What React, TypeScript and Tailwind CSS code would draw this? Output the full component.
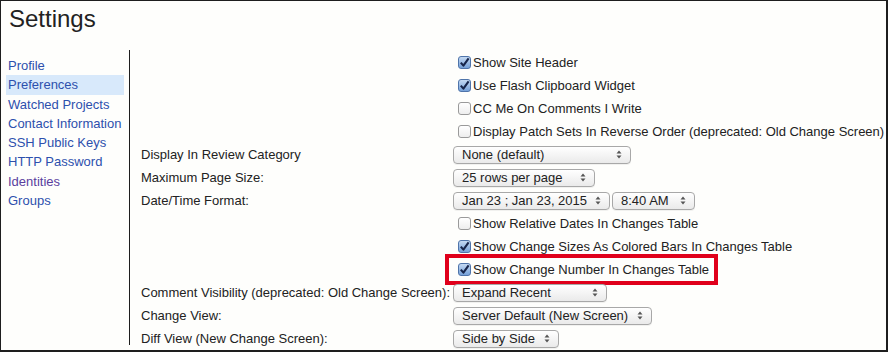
import React from 'react';

type Row = {
    label?: string;
    kind: 'check' | 'select' | 'pair';
    text?: string;
    checked?: boolean;
    width?: string;
    boxed?: boolean;
};

const rows: Row[] = [
    { kind: 'check', text: 'Show Site Header', checked: true },
    { kind: 'check', text: 'Use Flash Clipboard Widget', checked: true },
    { kind: 'check', text: 'CC Me On Comments I Write' },
    { kind: 'check', text: 'Display Patch Sets In Reverse Order (deprecated: Old Change Screen)' },
    { label: 'Display In Review Category', kind: 'select', text: 'None (default)', width: 'w-[178px]' },
    { label: 'Maximum Page Size:', kind: 'select', text: '25 rows per page', width: 'w-[142px]' },
    { label: 'Date/Time Format:', kind: 'pair' },
    { kind: 'check', text: 'Show Relative Dates In Changes Table' },
    { kind: 'check', text: 'Show Change Sizes As Colored Bars In Changes Table', checked: true },
    { kind: 'check', text: 'Show Change Number In Changes Table', checked: true, boxed: true },
    { label: 'Comment Visibility (deprecated: Old Change Screen):', kind: 'select', text: 'Expand Recent', width: 'w-[154px]' },
    { label: 'Change View:', kind: 'select', text: 'Server Default (New Screen)', width: 'w-[199px]' },
    { label: 'Diff View (New Change Screen):', kind: 'select', text: 'Side by Side', width: 'w-[106px]' },
];

const links = ['Profile', 'Preferences', 'Watched Projects', 'Contact Information', 'SSH Public Keys', 'HTTP Password', 'Identities', 'Groups'];

const Check = ({ checked }: { checked?: boolean }) =>
    checked ? (
        <span className="w-[13px] h-[13px] shrink-0 rounded-[3px] border border-[#4f74aa] bg-linear-to-b from-[#c4d9f2] to-[#76a1d8] flex items-center justify-center">
            <svg width="11" height="11" viewBox="0 0 11 11">
                <path d="M1.8 5.6 L4.4 8.6 L9.6 1.4" stroke="#17254a" strokeWidth="2.1" fill="none" strokeLinejoin="round" />
            </svg>
        </span>
    ) : (
        <span className="w-[13px] h-[13px] shrink-0 rounded-[3px] border border-[#9a9a9a] bg-linear-to-b from-white to-[#eeeeee]" />
    );

const Arrows = () => (
    <svg width="6" height="9" viewBox="0 0 6 9" className="shrink-0">
        <path d="M3 0.5 L5.5 3.5 L0.5 3.5 Z" fill="#555" />
        <path d="M3 8.5 L5.5 5.5 L0.5 5.5 Z" fill="#555" />
    </svg>
);

const Select = ({ text, width }: { text: string; width: string }) => (
    <span className={`flex items-center justify-between h-[18px] rounded-[4px] border border-[#a8a8a8] bg-linear-to-b from-white to-[#eaeaea] pl-[8px] pr-[8px] shadow-[0_1px_0_rgba(0,0,0,0.05)] ${width}`}>
        <span className="leading-none">{text}</span>
        <Arrows />
    </span>
);

const Control = ({ row }: { row: Row }) => {
    if (row.kind === 'select') return <Select text={row.text!} width={row.width!} />;
    if (row.kind === 'pair')
        return (
            <span className="flex gap-[2px]">
                <Select text="Jan 23 ; Jan 23, 2015" width="w-[157px]" />
                <Select text="8:40 AM" width="w-[83px]" />
            </span>
        );
    const inner = (
        <span className="flex items-center gap-[2px]">
            <Check checked={row.checked} />
            <span>{row.text}</span>
        </span>
    );
    if (row.boxed)
        return (
            <span className="flex items-center h-[31px] -my-[4px] -ml-[8px] pl-[9px] pr-[5px] border-4 border-[#e0001b]">
                {inner}
            </span>
        );
    return <span className="pl-[5px]">{inner}</span>;
};

const App = () => {
    return (
        <div className="w-[888px] h-[352px] bg-[#fefefc] border-t border-l border-r-2 border-b-2 border-[#1e1e1e] font-['Liberation_Sans',Arial,sans-serif] text-[13px] text-[#222] overflow-hidden">
            {/* Header */}
            <h1 className="pl-[8px] pt-[4px] h-[49px] text-[24px] leading-[28px] text-[#222]">Settings</h1>

            <div className="flex">
                {/* Sidebar */}
                <div className="w-[129px] h-[295px] shrink-0 border-r border-[#1e1e1e]">
                    <ul className="ml-[5px] w-[118px] pt-[6px]">
                        {links.map((l) => (
                            <li
                                key={l}
                                className={`h-[19.3px] leading-[19.3px] pl-[2px] whitespace-nowrap ${l === 'Preferences' ? 'bg-[#d8e9fb]' : ''} ${l === 'Identities' ? 'text-[#5a3f9e]' : 'text-[#2d50ad]'}`}
                            >
                                {l}
                            </li>
                        ))}
                    </ul>
                </div>

                {/* Preferences table */}
                <div className="grid grid-cols-[312px_1fr] pl-[11px] mt-[1px]">
                    {rows.map((r, i) => (
                        <React.Fragment key={i}>
                            <div className="h-[23px] flex items-center whitespace-nowrap">{r.label ?? ''}</div>
                            <div className="h-[23px] flex items-center whitespace-nowrap">
                                <Control row={r} />
                            </div>
                        </React.Fragment>
                    ))}
                </div>
            </div>
        </div>
    );
};

export default App;
